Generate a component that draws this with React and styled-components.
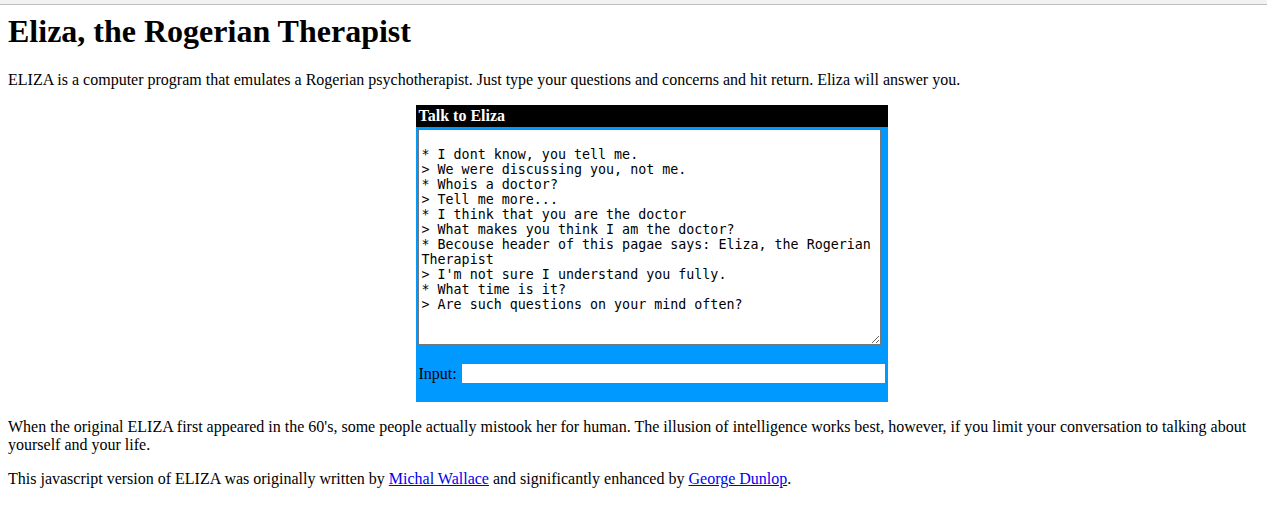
import React from 'react';
import styled, { createGlobalStyle } from 'styled-components';

const GlobalStyle = createGlobalStyle`
  body {
    margin: 0;
    background: #fff;
    color: #000;
    font-family: "Liberation Serif", "Times New Roman", serif;
    font-size: 16px;
  }
`;

const TopBar = styled.div`
  height: 4px;
  background: #f2f2f2;
  border-bottom: 1px solid #bdbdbd;
`;

const Page = styled.div`
  padding: 0 8px 8px;
`;

const Title = styled.h1`
  font-size: 32px;
  font-weight: bold;
  margin: 8px 0 21px;
`;

const Para = styled.p`
  margin: 16px 0;
  line-height: 18px;
`;

const Center = styled.div`
  padding-left: 36px;
`;

const Panel = styled.div`
  width: 472px;
  margin: 0 auto;
`;

const PanelHeader = styled.div`
  background: #000;
  color: #fff;
  font-weight: bold;
  height: 22px;
  line-height: 21px;
  padding: 0 3px;
`;

const PanelBody = styled.div`
  background: #0099ff;
  padding: 2px 2px 18px 2px;
  display: flex;
  flex-direction: column;
  gap: 18px;
`;

const Transcript = styled.textarea`
  display: block;
  box-sizing: border-box;
  width: 463px;
  height: 216px;
  padding: 2px 3px;
  margin: 0;
  font-family: "DejaVu Sans Mono", monospace;
  font-size: 13.333px;
  line-height: 15px;
  color: #000;
  background: #fff;
`;

const InputRow = styled.label`
  display: flex;
  align-items: center;
  gap: 4px;
  padding-left: 1px;
`;

const Field = styled.input`
  flex: 1;
  box-sizing: border-box;
  height: 21px;
  margin: 0;
`;

const Link = styled.a`
  color: #0000ee;
  text-decoration: underline;
`;

const conversation = `
* I dont know, you tell me.
> We were discussing you, not me.
* Whois a doctor?
> Tell me more...
* I think that you are the doctor
> What makes you think I am the doctor?
* Becouse header of this pagae says: Eliza, the Rogerian Therapist
> I'm not sure I understand you fully.
* What time is it?
> Are such questions on your mind often?`;

const App = () => {
    return (
        <>
            <GlobalStyle />
            <TopBar />
            <Page>
                <Title>Eliza, the Rogerian Therapist</Title>
                <Para>
                    ELIZA is a computer program that emulates a Rogerian psychotherapist. Just type your questions and concerns and hit return. Eliza will answer you.
                </Para>
                <Center>
                    <Panel>
                        <PanelHeader>Talk to Eliza</PanelHeader>
                        <PanelBody>
                            <Transcript readOnly value={conversation} />
                            <InputRow>
                                Input:
                                <Field type="text" />
                            </InputRow>
                        </PanelBody>
                    </Panel>
                </Center>
                <Para>
                    When the original ELIZA first appeared in the 60's, some people actually mistook her for human. The illusion of intelligence works best, however, if you limit your conversation to talking about yourself and your life.
                </Para>
                <Para>
                    This javascript version of ELIZA was originally written by <Link href="#">Michal Wallace</Link> and significantly enhanced by <Link href="#">George Dunlop</Link>.
                </Para>
            </Page>
        </>
    );
};

export default App;
